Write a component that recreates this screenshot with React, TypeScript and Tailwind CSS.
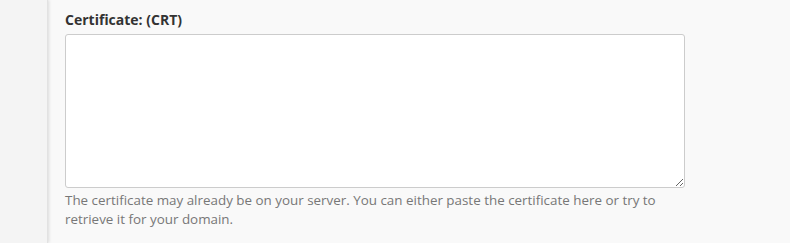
const App = () => {
    return (
        <div className="flex w-full h-[243px] bg-[#f9f9f9] font-['Open_Sans',sans-serif]">
            <div className="w-[48px] shrink-0 bg-[#f4f4f4] border-r border-[#e2e2e2] shadow-[1px_0_3px_rgba(0,0,0,0.12)]" />
            <div className="pl-[17px] pt-[10px]">
                <label className="block text-[14px] font-bold text-[#333] leading-[20px] mb-[4px]">Certificate: (CRT)</label>
                <textarea className="block w-[620px] h-[154px] bg-white border border-[#ccc] rounded-[3px] resize-y outline-none" />
                <p className="w-[620px] mt-[3px] text-[13.4px] leading-[19px] text-[#777]">
                    The certificate may already be on your server. You can either paste the certificate here or try to retrieve it for your domain.
                </p>
            </div>
        </div>
    )
}

export default App
